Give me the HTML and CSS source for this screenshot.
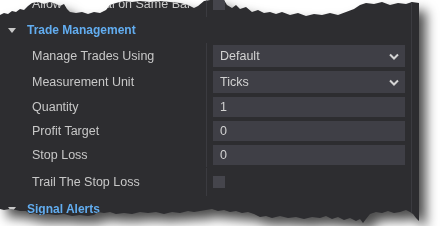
FILE: index.html
```html
<!DOCTYPE html>
<html lang="en">
<head>
    <meta charset="UTF-8">
    <title>Strategy Properties</title>
    <link rel="stylesheet" href="styles.css">
</head>
<body>
    <div class="shot">
        <div class="panel">
            <div class="grid">
                <div class="prop first">
                    <div class="label">Allow Reversal on Same Bar</div>
                    <div class="value"><span class="check"></span></div>
                </div>

                <div class="category">
                    <svg class="caret" width="8" height="5" viewBox="0 0 8 5"><path d="M0 0h8L4 5z" fill="#c8c8c8"/></svg>
                    Trade Management
                </div>

                <div class="prop tall">
                    <div class="label">Manage Trades Using</div>
                    <div class="value">
                        <div class="field">Default
                            <svg class="chevron" width="10" height="7" viewBox="0 0 10 7"><path d="M1 1.5l4 4 4-4" fill="none" stroke="#d4d4d4" stroke-width="2"/></svg>
                        </div>
                    </div>
                </div>

                <div class="prop tall">
                    <div class="label">Measurement Unit</div>
                    <div class="value">
                        <div class="field">Ticks
                            <svg class="chevron" width="10" height="7" viewBox="0 0 10 7"><path d="M1 1.5l4 4 4-4" fill="none" stroke="#d4d4d4" stroke-width="2"/></svg>
                        </div>
                    </div>
                </div>

                <div class="prop">
                    <div class="label">Quantity</div>
                    <div class="value"><div class="field">1</div></div>
                </div>

                <div class="prop">
                    <div class="label">Profit Target</div>
                    <div class="value"><div class="field">0</div></div>
                </div>

                <div class="prop">
                    <div class="label">Stop Loss</div>
                    <div class="value"><div class="field">0</div></div>
                </div>

                <div class="prop check-row">
                    <div class="label">Trail The Stop Loss</div>
                    <div class="value"><span class="check"></span></div>
                </div>

                <div class="category">
                    <svg class="caret" width="8" height="5" viewBox="0 0 8 5"><path d="M0 0h8L4 5z" fill="#c8c8c8"/></svg>
                    Signal Alerts
                </div>
            </div>
            <div class="scroll"></div>
        </div>
    </div>
</body>
</html>
```

FILE: styles.css
```css
body {
    margin: 0;
    background-color: #ffffff;
    font-family: "Liberation Sans", Arial, sans-serif;
    font-size: 12.5px;
}

.shot {
    width: 419px;
    filter: drop-shadow(7px 8px 6px rgba(0, 0, 0, 0.7));
}

.panel {
    height: 226px;
    background: #2d2d30;
    display: flex;
    clip-path: polygon(
        0 15px, 4px 13px, 8px 14px, 12px 11px, 16px 12px, 20px 9px, 24px 10px, 28px 6px,
        32px 3px, 38px 2px, 44px 4px, 50px 2px, 56px 4px, 60px 6px, 64px 4px, 67px 9px,
        70px 12px, 76px 13px, 82px 12px, 88px 14px, 94px 12px, 100px 13px, 106px 10px, 110px 5px,
        116px 3px, 124px 1px, 132px 2px, 140px 1px, 150px 2px, 160px 1px, 170px 2px, 180px 3px,
        188px 5px, 194px 8px, 198px 6px, 204px 1px, 210px 0, 224px 0, 227px 5px, 232px 8px,
        236px 5px, 240px 9px, 246px 7px, 252px 12px, 258px 10px, 264px 13px, 270px 12px,
        276px 14px, 282px 12px, 290px 15px, 298px 13px, 306px 16px, 314px 14px, 322px 15px,
        330px 13px, 338px 15px, 346px 12px, 354px 9px, 360px 5px, 366px 3px, 374px 4px,
        382px 2px, 390px 5px, 398px 3px, 406px 4px, 412px 2px, 419px 3px,
        419px 221px, 416px 218px, 413px 214px, 410px 212px, 406px 210px, 400px 212px,
        394px 213px, 388px 211px, 382px 213px, 376px 212px, 370px 214px, 366px 219px,
        363px 223px, 360px 219px, 356px 221px, 350px 218px, 344px 220px, 338px 217px,
        332px 219px, 326px 216px, 320px 218px, 312px 217px, 304px 219px, 296px 217px,
        288px 218px, 280px 216px, 272px 218px, 266px 216px, 260px 217px, 254px 214px,
        248px 212px, 242px 213px, 236px 211px, 230px 212px, 224px 210px, 218px 211px,
        212px 209px, 206px 210px, 200px 211px, 194px 212px, 188px 211px, 180px 213px,
        172px 212px, 164px 214px, 156px 212px, 148px 213px, 140px 212px, 132px 214px,
        124px 213px, 116px 214px, 110px 212px, 104px 213px, 98px 212px, 94px 215px,
        88px 216px, 80px 215px, 72px 216px, 64px 214px, 56px 215px, 48px 214px,
        40px 215px, 34px 213px, 30px 214px, 26px 211px, 20px 211px, 16px 210px,
        10px 209px, 4px 210px, 0 209px
    );
}

.grid {
    flex: 1;
}

.scroll {
    width: 7px;
    border-left: 1px solid #3b3b40;
}

.prop {
    display: flex;
    height: 24px;
}

.prop.first {
    height: 26px;
    margin-top: -9px;
}

.prop.tall {
    height: 26px;
}

.prop.check-row {
    height: 28px;
    padding-top: 1px;
}

.prop .label {
    box-sizing: border-box;
    width: 207px;
    padding-left: 32px;
    border-right: 1px solid #3b3b40;
    color: #c8c8c8;
    display: flex;
    align-items: center;
    white-space: nowrap;
}

.prop .value {
    flex: 1;
    padding: 2px 6px;
    display: flex;
    align-items: center;
}

.field {
    flex: 1;
    height: 20px;
    background: #3f3f46;
    color: #d2d2d2;
    padding: 0 6px 0 7px;
    display: flex;
    align-items: center;
    justify-content: space-between;
}

.tall .field {
    height: 22px;
}

.check {
    width: 12px;
    height: 12px;
    background: #45454c;
}

.category {
    height: 26px;
    display: flex;
    align-items: center;
    padding-left: 8px;
    color: #62adf0;
    font-weight: bold;
    font-size: 12px;
}

.caret {
    margin-right: 11px;
}
```
